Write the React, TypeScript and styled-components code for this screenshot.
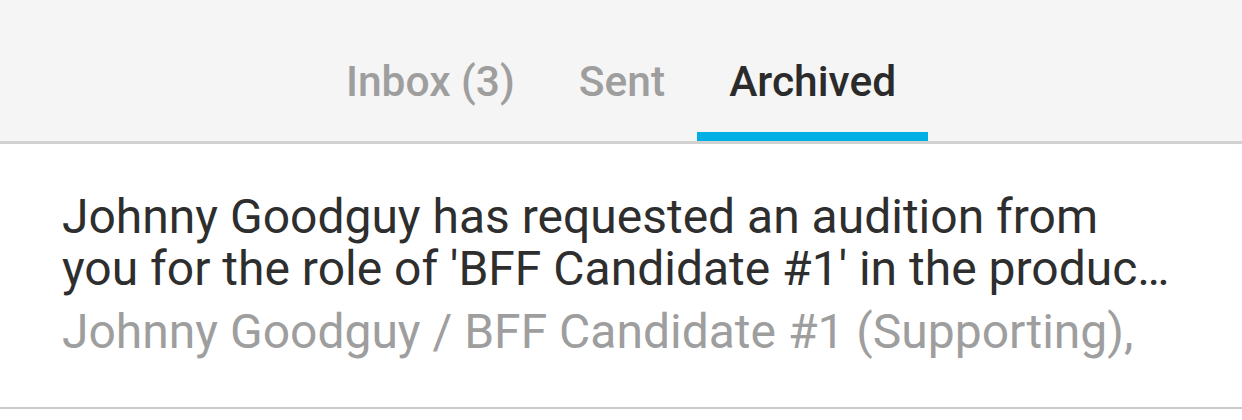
import styled, { createGlobalStyle } from "styled-components";

const GlobalStyle = createGlobalStyle`
  body {
    margin: 0;
    background: #ffffff;
    font-family: Roboto, "Liberation Sans", sans-serif;
  }
`;

const Page = styled.div`
  width: 1242px;
  height: 420px;
  overflow: hidden;
  background: #ffffff;
`;

const TabBar = styled.nav`
  display: flex;
  justify-content: center;
  height: 141px;
  background: #f5f5f5;
  border-bottom: 3px solid #d2d2d2;
  box-sizing: content-box;
`;

const Tab = styled.div<{ active?: boolean }>`
  display: flex;
  align-items: flex-start;
  padding: 56px 32px 0;
  font-size: 42.5px;
  font-weight: 500;
  line-height: 52px;
  color: ${(p) => (p.active ? "#2b2b2b" : "#9e9e9e")};
  border-bottom: 9px solid ${(p) => (p.active ? "#00afe4" : "transparent")};
`;

const Item = styled.div`
  box-sizing: border-box;
  height: 265px;
  padding: 47px 72px 0 62px;
  border-bottom: 2px solid #cacaca;
`;

const Message = styled.div`
  font-size: 48px;
  line-height: 52px;
  color: #2e2e2e;
`;

const Line = styled.div<{ truncate?: boolean }>`
  white-space: nowrap;
  ${(p) => p.truncate && "overflow: hidden; text-overflow: ellipsis; padding-bottom: 4px; margin-bottom: -4px;"}
`;

const Meta = styled.div`
  margin-top: 11px;
  font-size: 48px;
  line-height: 52px;
  color: #9e9e9e;
  white-space: nowrap;
`;

const tabs = [
  { label: "Inbox (3)", active: false },
  { label: "Sent", active: false },
  { label: "Archived", active: true },
];

export default function App() {
  return (
    <Page>
      <GlobalStyle />
      <TabBar>
        {tabs.map((t) => (
          <Tab key={t.label} active={t.active}>
            {t.label}
          </Tab>
        ))}
      </TabBar>
      <Item>
        <Message>
          <Line>Johnny Goodguy has requested an audition from</Line>
          <Line truncate>
            you for the role of 'BFF Candidate #1' in the production of 'Best
            Friends Forever'.
          </Line>
        </Message>
        <Meta>Johnny Goodguy / BFF Candidate #1 (Supporting),</Meta>
      </Item>
    </Page>
  );
}
